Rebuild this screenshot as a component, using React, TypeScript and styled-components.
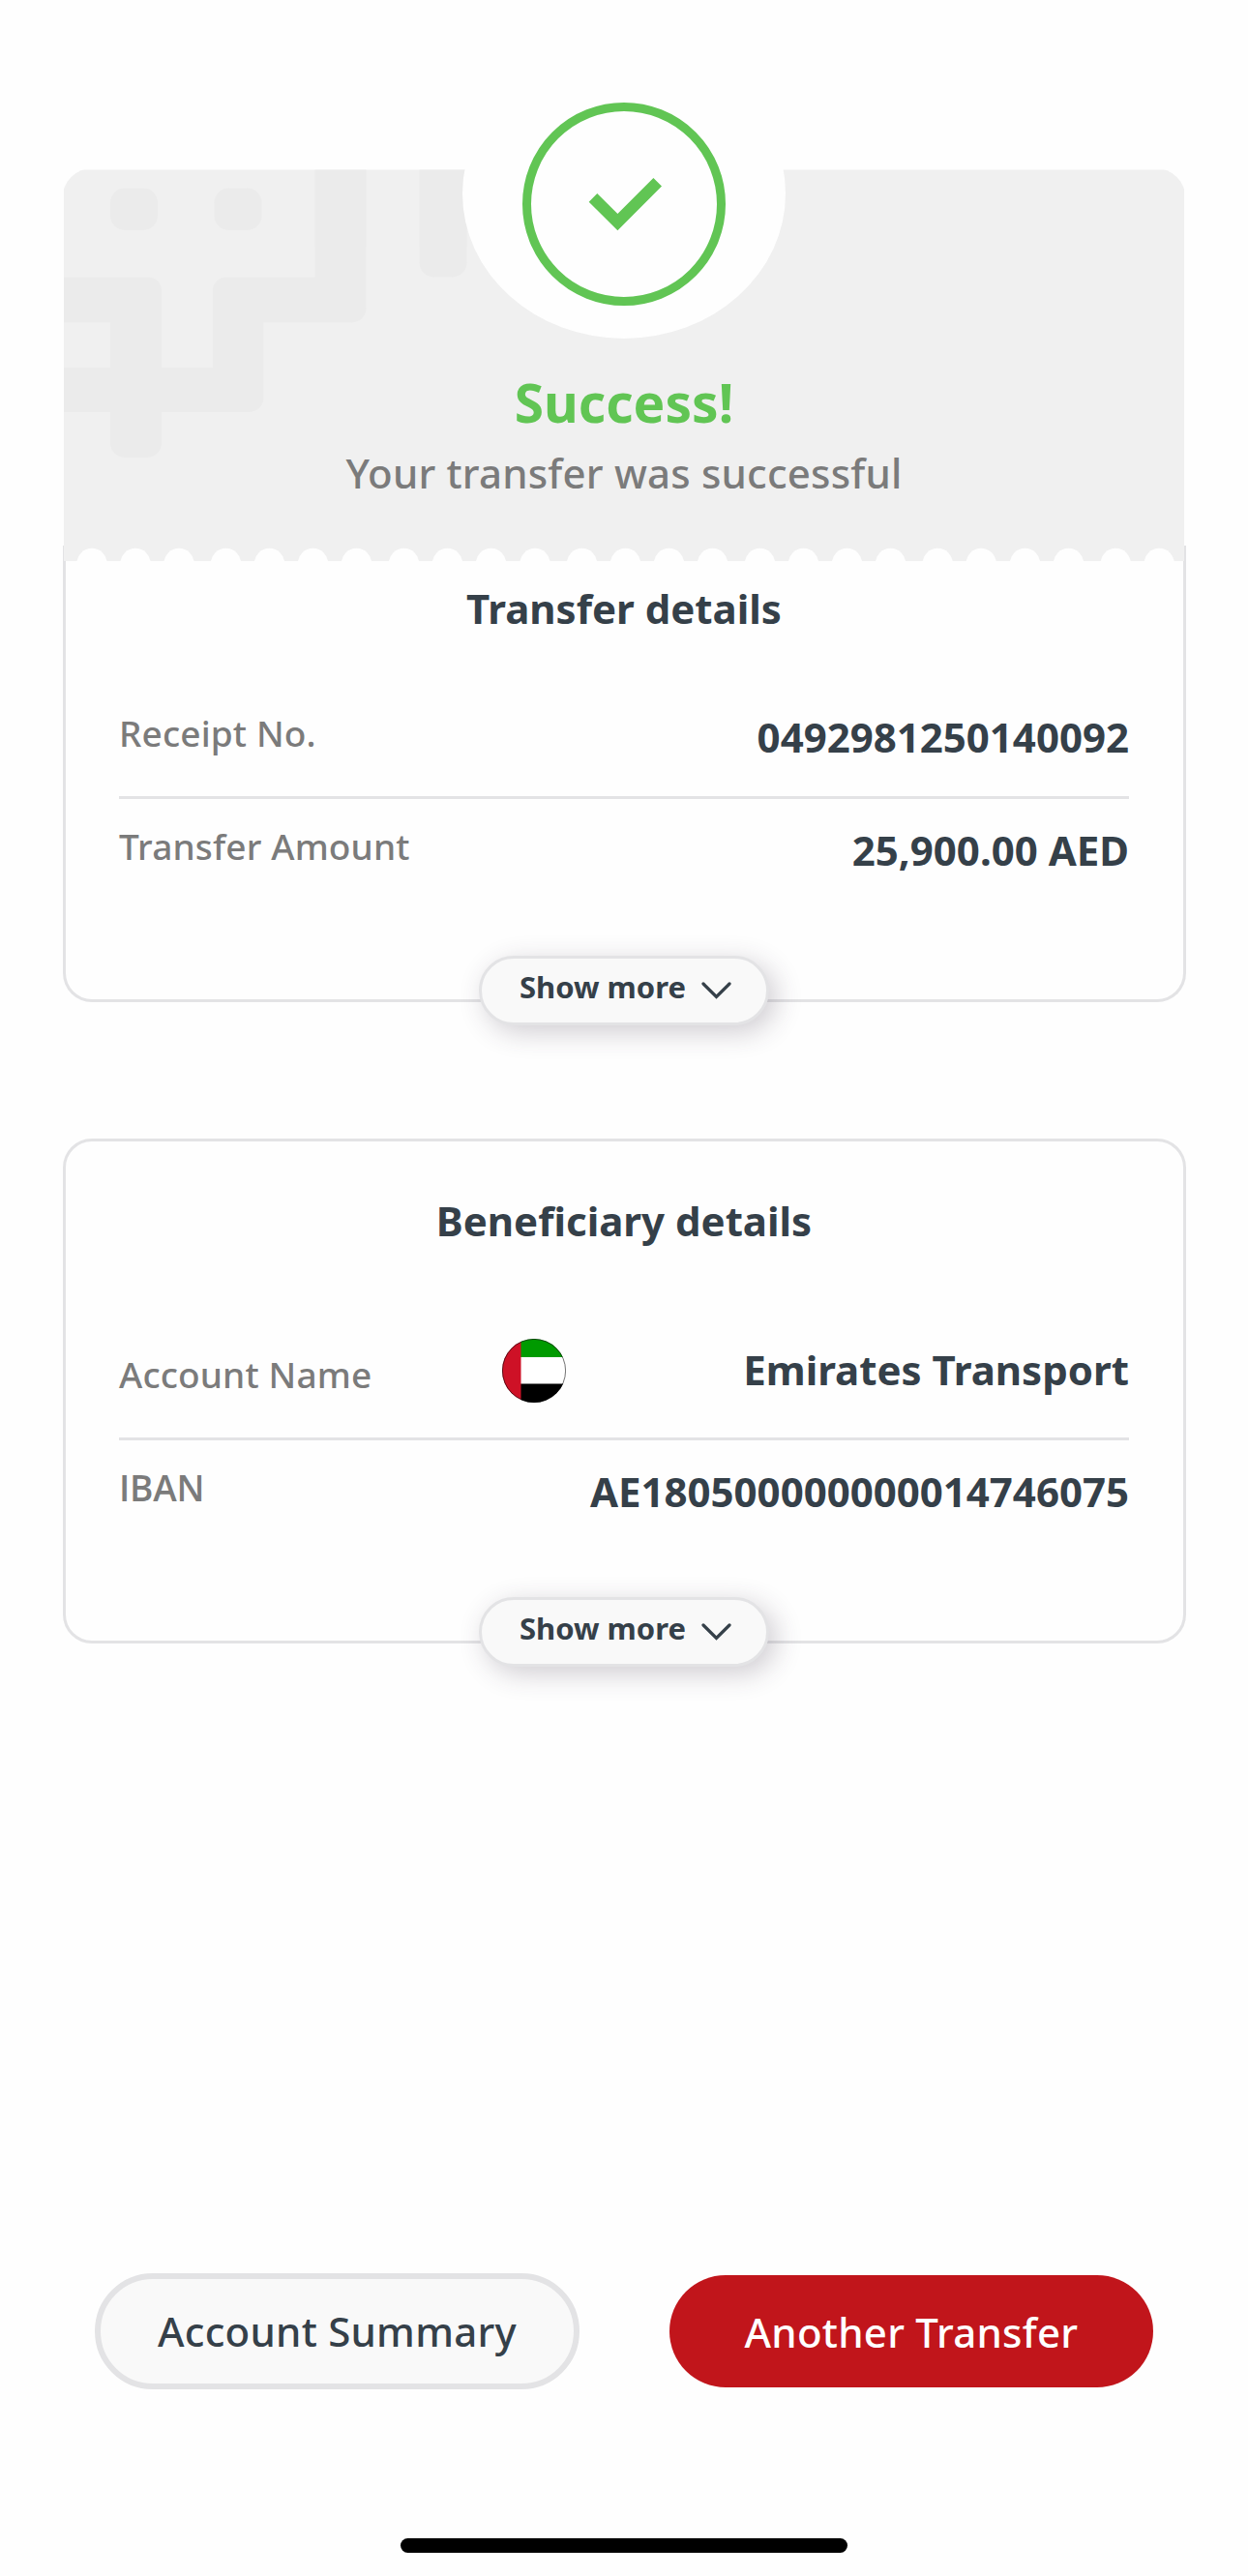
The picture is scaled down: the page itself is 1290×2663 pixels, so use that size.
import React from 'react';
import styled, { createGlobalStyle } from 'styled-components';

const ink = '#354049';
const muted = '#7b7b7b';
const line = '#e3e3e5';
const green = '#61c554';

const GlobalStyle = createGlobalStyle`
  * { box-sizing: border-box; }
  body { margin: 0; background: #fefefe; }
`;

const Screen = styled.main`
  width: 1290px;
  height: 2663px;
  padding: 175px 65px 24px;
  display: flex;
  flex-direction: column;
  align-items: center;
  background: #fefefe;
  font-family: 'Noto Sans', sans-serif;
  color: ${ink};
  overflow: hidden;
`;

const Receipt = styled.section`
  width: 1160px;
  display: flex;
  flex-direction: column;
  align-items: center;
`;

const Header = styled.header`
  position: relative;
  z-index: 1;
  width: 1158px;
  height: 405px;
  display: flex;
  flex-direction: column;
  align-items: center;
`;

const HeaderArt = styled.svg`
  position: absolute;
  inset: 0;
  z-index: -1;
`;

const Badge = styled.div`
  width: 334px;
  height: 300px;
  margin-top: -125px;
  padding-top: 56px;
  border-radius: 50%;
  background: #fefefe;
  display: flex;
  justify-content: center;
`;

const Success = styled.h1`
  margin: 29px 0 0;
  font-size: 55px;
  line-height: 74px;
  font-weight: 700;
  color: ${green};
`;

const Subtitle = styled.p`
  margin: 7px 0 0;
  font-size: 42px;
  line-height: 58px;
  font-weight: 500;
  letter-spacing: 0.2px;
  color: ${muted};
`;

const Card = styled.section<{ $torn?: boolean }>`
  width: 1161px;
  height: ${p => (p.$torn ? 472 : 522)}px;
  margin-top: ${p => (p.$torn ? -16 : 141)}px;
  padding: ${p => (p.$torn ? 36 : 53)}px 56px 0;
  border: 3px solid ${line};
  border-top-width: ${p => (p.$torn ? 0 : 3)}px;
  border-radius: ${p => (p.$torn ? '0 0 30px 30px' : '30px')};
  display: flex;
  flex-direction: column;
  align-items: center;
`;

const CardTitle = styled.h2`
  margin: 0;
  font-size: 42px;
  line-height: 58px;
  font-weight: 700;
`;

const Rows = styled.dl<{ $gap: number }>`
  width: 1044px;
  margin: ${p => p.$gap}px 0 0;
`;

const Row = styled.div`
  height: 117px;
  padding-top: 24px;
  display: flex;
  justify-content: space-between;
  align-items: flex-start;
  border-bottom: 3px solid ${line};
  &:last-child { border-bottom: 0; }
`;

const Label = styled.dt<{ $acronym?: boolean }>`
  font-family: ${p => (p.$acronym ? "'Open Sans'" : "'Noto Sans'")}, sans-serif;
  font-size: 37px;
  line-height: 50px;
  font-weight: ${p => (p.$acronym ? 600 : 500)};
  letter-spacing: ${p => (p.$acronym ? '-0.2px' : '0.15px')};
  color: ${muted};
`;

const Value = styled.dd<{ $flagged?: boolean }>`
  margin: ${p => (p.$flagged ? '-12px 0 0' : '0')};
  width: ${p => (p.$flagged ? '648px' : 'auto')};
  display: flex;
  justify-content: space-between;
  align-items: center;
  font-size: 42px;
  line-height: 58px;
  font-weight: 700;
`;

const ValueText = styled.span`
  padding-bottom: 2px;
`;

const MoreButton = styled.button`
  flex: none;
  width: 300px;
  height: 72px;
  margin-top: auto;
  margin-bottom: -27px;
  padding: 0 36px 9px 39px;
  display: flex;
  align-items: center;
  justify-content: space-between;
  border: 3px solid ${line};
  border-radius: 36px;
  background: #f9f9f9;
  box-shadow: 7px 7px 28px rgba(60, 45, 65, 0.24);
  color: ${ink};
  font: 700 31px/42px 'Noto Sans', sans-serif;
`;

const Chevron = styled.svg`
  margin-top: 8px;
`;

const Actions = styled.nav`
  width: 1094px;
  margin-top: auto;
  margin-bottom: 154px;
  display: flex;
  align-items: center;
  justify-content: space-between;
`;

const Action = styled.button<{ $primary?: boolean }>`
  width: ${p => (p.$primary ? 500 : 501)}px;
  height: ${p => (p.$primary ? 116 : 120)}px;
  padding: ${p => (p.$primary ? 2 : 0)}px 0 0;
  border: ${p => (p.$primary ? '0' : `6px solid ${line}`)};
  border-radius: 60px;
  background: ${p => (p.$primary ? '#c1151b' : '#f9f9f9')};
  color: ${p => (p.$primary ? '#fff' : ink)};
  font: 500 42px/58px 'Noto Sans', sans-serif;
  letter-spacing: 0.25px;
`;

const HomeBar = styled.div`
  width: 462px;
  height: 15px;
  border-radius: 8px;
  background: #000;
`;

const notches = [
  95, 140, 185, 233.5, 278.5, 323.5, 368.5, 417.5, 462.5, 507.5, 553, 601.5, 646.5,
  691.5, 736.5, 785.5, 830.5, 875.5, 920.5, 969.2, 1014.2, 1059.5, 1104.5, 1153.2, 1198.2,
];

function TicketBackground() {
  return (
    <HeaderArt width="1158" height="405" viewBox="66 175 1158 405">
      <defs>
        <clipPath id="ticket">
          <path d="M64.5 580V205a31 31 0 0 1 31-31H1194.5a31 31 0 0 1 31 31V580z" />
        </clipPath>
      </defs>
      <g clipPath="url(#ticket)">
        <path fill="#f0f0f0" d="M66 175.5H1224V580H66z" />
        <g fill="#ebebeb">
          <rect x="114" y="194.5" width="49" height="43.5" rx="15" />
          <rect x="221.5" y="194.5" width="49" height="43.5" rx="15" />
          <path d="M433.5 175.5h49v96a15 15 0 0 1-15 15h-19a15 15 0 0 1-15-15z" />
          <path
            fillRule="evenodd"
            d="M66 286.5h87a14 14 0 0 1 14 14V380h53v-79.500a14 14 0 0 1 14-14h91.500v-111h53v143a15 15 0 0 1-15 15h-91v77.500a15 15 0 0 1-15 15H167v32a15 15 0 0 1-15 15h-23a15 15 0 0 1-15-15v-32H66zM66 333.500V380h48v-46.500z"
          />
        </g>
      </g>
      <g fill="#fefefe">
        {notches.map(x => (
          <circle key={x} cx={x} cy="582.500" r="15.700" />
        ))}
      </g>
    </HeaderArt>
  );
}

function CheckMark() {
  return (
    <svg width="210" height="210" viewBox="0 0 210 210">
      <circle cx="105" cy="105" r="100.500" fill="none" stroke={green} strokeWidth="9" />
      <path fill={green} d="M68.700 102.700l8.600-8.600 21.100 20.900 37-37 8.600 8.500-45.600 45.800z" />
    </svg>
  );
}

function Flag() {
  return (
    <svg width="66" height="66" viewBox="0 0 66 66">
      <defs>
        <clipPath id="flag"><circle cx="33" cy="33" r="33" /></clipPath>
      </defs>
      <g clipPath="url(#flag)">
        <path fill="#fff" d="M0 0h66v66H0z" />
        <path fill="#009a00" d="M19 0h47v19H19z" />
        <path fill="#000" d="M19 46.500h47V66H19z" />
        <path fill="#ce1126" d="M0 0h19.500v66H0z" />
      </g>
      <circle cx="33" cy="33" r="32.600" fill="none" stroke="#000" strokeOpacity=".7" strokeWidth=".8" />
    </svg>
  );
}

function ShowMore() {
  return (
    <MoreButton type="button">
      <span>Show more</span>
      <Chevron width="31" height="18" viewBox="0 0 31 18">
        <path d="M2 2l13.500 13.500L29 2" fill="none" stroke={ink} strokeWidth="3.200" strokeLinecap="round" />
      </Chevron>
    </MoreButton>
  );
}

export default function App() {
  return (
    <>
      <GlobalStyle />
      <Screen>
        <Receipt>
          <Header>
            <TicketBackground />
            <Badge><CheckMark /></Badge>
            <Success>Success!</Success>
            <Subtitle>Your transfer was successful</Subtitle>
          </Header>
          <Card $torn>
            <CardTitle>Transfer details</CardTitle>
            <Rows $gap={51}>
              <Row><Label>Receipt No.</Label><Value>0492981250140092</Value></Row>
              <Row><Label>Transfer Amount</Label><Value>25,900.00 AED</Value></Row>
            </Rows>
            <ShowMore />
          </Card>
        </Receipt>
        <Card>
          <CardTitle>Beneficiary details</CardTitle>
          <Rows $gap={81}>
            <Row>
              <Label>Account Name</Label>
              <Value $flagged><Flag /><ValueText>Emirates Transport</ValueText></Value>
            </Row>
            <Row><Label $acronym>IBAN</Label><Value>AE180500000000014746075</Value></Row>
          </Rows>
          <ShowMore />
        </Card>
        <Actions>
          <Action type="button">Account Summary</Action>
          <Action type="button" $primary>Another Transfer</Action>
        </Actions>
        <HomeBar />
      </Screen>
    </>
  );
}
